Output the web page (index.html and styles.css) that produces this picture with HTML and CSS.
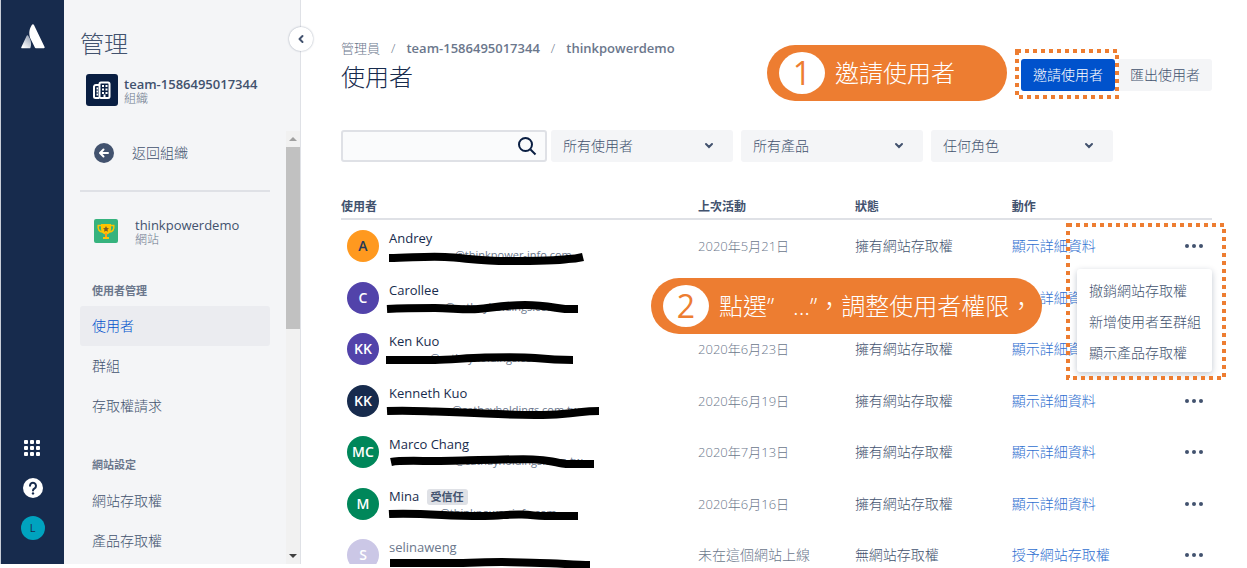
FILE: index.html
```html
<!DOCTYPE html>
<html lang="zh-Hant">
<head>
    <meta charset="UTF-8">
    <meta name="viewport" content="width=device-width, initial-scale=1.0">
    <title>使用者 - 管理</title>
    <link rel="stylesheet" href="styles.css">
</head>
<body>
    <div class="app">
        <nav class="rail" aria-label="產品">
            <a href="#" class="logo" aria-label="首頁">
                <svg width="26" height="26" viewBox="0 0 26 26">
                    <defs>
                        <linearGradient id="fade" x1="1" y1="0" x2="0.3" y2="1">
                            <stop offset="0" stop-color="#8b98ad"/>
                            <stop offset="1" stop-color="#fff"/>
                        </linearGradient>
                    </defs>
                    <path d="M8 11.500c-.4-.5-1-.4-1.300.2L1.300 23.200c-.300.600.1 1.100.8 1.100h7.600c.3 0 .6-.2.7-.4 1.500-3.400.6-8.900-2.400-12.400z" fill="url(#fade)"/>
                    <path d="M11.800.9c-3.300 5-3 10.400-.9 14.700l4.100 8.200c.1.300.4.500.8.500h8c.7 0 1.100-.6.800-1.200L14 .9c-.400-.9-1.700-.9-2.200 0z" fill="#fff"/>
                </svg>
            </a>
            <div class="rail-bottom">
                <button class="rail-btn" aria-label="切換產品">
                    <svg width="17" height="17" viewBox="0 0 17 17" fill="#fff">
                        <rect x="0" y="0" width="4" height="4" rx="1"/><rect x="6" y="0" width="4" height="4" rx="1"/><rect x="12" y="0" width="4" height="4" rx="1"/>
                        <rect x="0" y="6" width="4" height="4" rx="1"/><rect x="6" y="6" width="4" height="4" rx="1"/><rect x="12" y="6" width="4" height="4" rx="1"/>
                        <rect x="0" y="12" width="4" height="4" rx="1"/><rect x="6" y="12" width="4" height="4" rx="1"/><rect x="12" y="12" width="4" height="4" rx="1"/>
                    </svg>
                </button>
                <button class="rail-btn" aria-label="說明">
                    <svg width="20" height="20" viewBox="0 0 20 20">
                        <circle cx="10" cy="10" r="10" fill="#fff"/>
                        <path d="M7 7.800a3 3 0 1 1 4.600 2.500c-1 .6-1.600 1-1.600 2.100" fill="none" stroke="#172b4d" stroke-width="2" stroke-linecap="round"/>
                        <circle cx="10" cy="15.400" r="1.200" fill="#172b4d"/>
                    </svg>
                </button>
                <button class="rail-btn me">L</button>
            </div>
        </nav>

        <aside class="sidebar">
            <button class="collapse" aria-label="收合">
                <svg width="8" height="10" viewBox="0 0 8 10"><path d="M5.500 2L2.500 5l3 3" fill="none" stroke="#42526e" stroke-width="2" stroke-linecap="round" stroke-linejoin="round"/></svg>
            </button>
            <h2 class="side-title">管理</h2>
            <div class="org">
                <span class="org-icon">
                    <svg width="20" height="20" viewBox="0 0 20 20" fill="none" stroke="#fff" stroke-width="2" stroke-linejoin="round">
                        <path d="M7 18H3.500A1.500 1.500 0 0 1 2 16.500V6.500A2 2 0 0 1 4 5h3"/>
                        <rect x="7.500" y="2.500" width="10" height="15.500" rx="1.500"/>
                        <path d="M10 6h2M13.500 6h2M10 9.500h2M13.500 9.500h2M10 13h2M13.500 13h2M4.500 8.500h1.500M4.500 11.500h1.500M4.500 14.500h1.500M12.500 14.500v3"/>
                    </svg>
                </span>
                <div>
                    <div class="org-name">team-1586495017344</div>
                    <div class="kind">組織</div>
                </div>
            </div>
            <div class="side-scroll">
                <div class="side-nav">
                    <a href="#" class="back">
                        <svg width="20" height="20" viewBox="0 0 20 20">
                            <circle cx="10" cy="10" r="10" fill="#42526e"/>
                            <path d="M14 10H6.500M9.500 6.500L6 10l3.500 3.500" fill="none" stroke="#fff" stroke-width="2" stroke-linecap="round" stroke-linejoin="round"/>
                        </svg>
                        <span>返回組織</span>
                    </a>
                    <div class="site">
                        <svg width="24" height="24" viewBox="0 0 24 24">
                            <rect width="24" height="24" rx="2" fill="#36b37e"/>
                            <path d="M7 6.500H4.200c-.6 4 1.300 6.500 4.300 6.500M17 6.500h2.800c.6 4-1.300 6.500-4.300 6.500" fill="none" stroke="#ffc400" stroke-width="1.500"/>
                            <path d="M7 5h10v5c0 3-2 5-4 5.500V18h2v2H9v-2h2v-2.500C9 15 7 13 7 10z" fill="#ffc400"/>
                            <path d="M11 14h2v4h-2z" fill="#ff991f"/>
                            <path d="M12 7l1 2 2 .2-1.500 1.400.4 2.100-1.900-1-1.900 1 .4-2.100L9 9.200 11 9z" fill="#7a5b25"/>
                        </svg>
                        <div>
                            <div class="site-name">thinkpowerdemo</div>
                            <div class="kind">網站</div>
                        </div>
                    </div>
                    <h3 class="group">使用者管理</h3>
                    <a href="#" class="item active">使用者</a>
                    <a href="#" class="item">群組</a>
                    <a href="#" class="item">存取權請求</a>
                    <h3 class="group second">網站設定</h3>
                    <a href="#" class="item">網站存取權</a>
                    <a href="#" class="item">產品存取權</a>
                </div>
                <div class="scrollbar">
                    <span class="arrow up"></span>
                    <span class="thumb"></span>
                    <span class="arrow down"></span>
                </div>
            </div>
        </aside>

        <main class="main">
            <header class="page-head">
                <div>
                    <div class="crumbs">
                        <a href="#">管理員</a><span>/</span><a href="#" class="strong">team-1586495017344</a><span>/</span><a href="#" class="strong">thinkpowerdemo</a>
                    </div>
                    <h1>使用者</h1>
                </div>
                <div class="actions">
                    <div class="callout one"><span class="num">1</span>邀請使用者</div>
                    <div class="invite">
                        <button class="btn primary">邀請使用者</button>
                        <svg class="marker"><rect x="2" y="2"/></svg>
                    </div>
                    <button class="btn">匯出使用者</button>
                </div>
            </header>

            <form class="filters">
                <div class="search">
                    <input type="text" aria-label="搜尋使用者">
                    <svg width="20" height="20" viewBox="0 0 20 20" fill="none" stroke="#091e42" stroke-width="2"><circle cx="8.500" cy="8.500" r="6.500"/><path d="M13.500 13.500l5 5"/></svg>
                </div>
                <div class="selects">
                    <div class="select">
                        <select aria-label="使用者篩選"><option>所有使用者</option></select>
                        <svg width="10" height="8" viewBox="0 0 10 8"><path d="M2 2l3 3 3-3"/></svg>
                    </div>
                    <div class="select">
                        <select aria-label="產品篩選"><option>所有產品</option></select>
                        <svg width="10" height="8" viewBox="0 0 10 8"><path d="M2 2l3 3 3-3"/></svg>
                    </div>
                    <div class="select">
                        <select aria-label="角色篩選"><option>任何角色</option></select>
                        <svg width="10" height="8" viewBox="0 0 10 8"><path d="M2 2l3 3 3-3"/></svg>
                    </div>
                </div>
            </form>

            <div class="table-wrap">
                <table class="users">
                    <thead>
                        <tr><th class="c-user">使用者</th><th class="c-date">上次活動</th><th class="c-state">狀態</th><th>動作</th><th class="c-more"></th></tr>
                    </thead>
                    <tbody>
                        <tr>
                            <td><div class="user"><span class="avatar orange">A</span><div class="who"><div class="name">Andrey</div><div class="mail w1">@thinkpower-info.com</div>
                                <svg class="ink" viewBox="0 0 216 20"><path d="M4 10C25 10 40 8 60 9S95 13 123 13S170 13 183 11Q190 11 198 9"/></svg></div></div></td>
                            <td class="date">2020年5月21日</td><td>擁有網站存取權</td><td><a href="#">顯示詳細資料</a></td>
                            <td class="more">
                                <button class="dots" aria-label="更多"></button>
                                <div class="menu">
                                    <button>撤銷網站存取權</button>
                                    <button>新增使用者至群組</button>
                                    <button>顯示產品存取權</button>
                                </div>
                                <svg class="marker"><rect x="2" y="2"/></svg>
                            </td>
                        </tr>
                        <tr>
                            <td><div class="user"><span class="avatar purple">C</span><div class="who"><div class="name">Carollee</div><div class="mail w2">@cathayholdings.com</div>
                                <svg class="ink" viewBox="0 0 216 20"><path d="M2 9C20 8 35 8 50 8S80 10 93 9S120 5 140 5S170 8 180 9H193"/></svg></div></div></td>
                            <td class="date"></td><td></td><td><a href="#">顯示詳細資料</a></td>
                            <td class="more"><button class="dots" aria-label="更多"></button></td>
                        </tr>
                        <tr>
                            <td><div class="user"><span class="avatar purple">KK</span><div class="who"><div class="name">Ken Kuo</div><div class="mail w3">@cathayholdings.com</div>
                                <svg class="ink" viewBox="0 0 216 20"><path d="M1 9C20 9 35 9 50 9S80 7 100 6.500S140 6 150 7S175 9 188 9"/></svg></div></div></td>
                            <td class="date">2020年6月23日</td><td>擁有網站存取權</td><td><a href="#">顯示詳細資料</a></td>
                            <td class="more"><button class="dots" aria-label="更多"></button></td>
                        </tr>
                        <tr>
                            <td><div class="user"><span class="avatar navy">KK</span><div class="who"><div class="name">Kenneth Kuo</div><div class="mail w4">@cathayholdings.com.tw</div>
                                <svg class="ink" viewBox="0 0 216 20"><path d="M2 8C20 7 35 8 50 8.500S80 9.500 100 10.500S155 13 177 11S200 8 214 8"/></svg></div></div></td>
                            <td class="date">2020年6月19日</td><td>擁有網站存取權</td><td><a href="#">顯示詳細資料</a></td>
                            <td class="more"><button class="dots" aria-label="更多"></button></td>
                        </tr>
                        <tr>
                            <td><div class="user"><span class="avatar green">MC</span><div class="who"><div class="name">Marco Chang</div><div class="mail w5">@cathayholdings.com.tw</div>
                                <svg class="ink" viewBox="0 0 216 20"><path d="M6 8C15 6 35 7 50 7S90 6 117 5.500S155 5 167 7.500S180 10 190 10H209"/></svg></div></div></td>
                            <td class="date">2020年7月13日</td><td>擁有網站存取權</td><td><a href="#">顯示詳細資料</a></td>
                            <td class="more"><button class="dots" aria-label="更多"></button></td>
                        </tr>
                        <tr>
                            <td><div class="user"><span class="avatar green">M</span><div class="who"><div class="name">Mina <span class="tag">受信任</span></div><div class="mail w6">@thinkpower-info.com</div>
                                <svg class="ink" viewBox="0 0 216 20"><path d="M4 8C20 7 40 8 57 9S85 10 100 10S125 8 137 8.500S150 10 160 10H193"/></svg></div></div></td>
                            <td class="date">2020年6月16日</td><td>擁有網站存取權</td><td><a href="#">顯示詳細資料</a></td>
                            <td class="more"><button class="dots" aria-label="更多"></button></td>
                        </tr>
                        <tr class="inactive">
                            <td><div class="user"><span class="avatar lilac">S</span><div class="who"><div class="name">selinaweng</div><div class="mail"></div>
                                <svg class="ink" viewBox="0 0 216 20"><path d="M5 6H67C85 6 100 5 117 5S140 6 155 6S190 8 205 8"/></svg></div></div></td>
                            <td class="never">未在這個網站上線</td><td>無網站存取權</td><td><a href="#">授予網站存取權</a></td>
                            <td class="more"><button class="dots" aria-label="更多"></button></td>
                        </tr>
                    </tbody>
                </table>
                <div class="callout two"><span class="num">2</span>點選”&nbsp; &nbsp;...”，調整使用者權限，</div>
            </div>
        </main>
    </div>
</body>
</html>
```
FILE: styles.css
```css
:root {
    --navy: #172b4d;
    --text: #42526e;
    --muted: #6b778c;
    --link: #2f6fd0;
    --blue: #0052cc;
    --panel: #f4f5f7;
    --line: #dfe1e6;
    --orange: #ed7d31;
}

* {
    margin: 0;
    padding: 0;
    box-sizing: border-box;
}

body {
    font-family: "Open Sans", "Noto Sans CJK TC", sans-serif;
    font-size: 14px;
    font-weight: 300;
    line-height: 20px;
    color: var(--text);
    background: #fff;
    overflow: hidden;
}

button, input, select {
    font: inherit;
    color: inherit;
    border: none;
    background: none;
}

button {
    cursor: pointer;
}

a {
    color: inherit;
    text-decoration: none;
}

svg {
    display: block;
    flex: none;
}

.app {
    display: flex;
    height: 100vh;
}

/* white strip along the bottom edge of the window */
.app::after {
    content: "";
    position: fixed;
    left: 0;
    right: 0;
    bottom: 0;
    height: 4px;
    background: #fff;
    z-index: 1;
}

/* left rail */
.rail {
    width: 64px;
    flex: none;
    display: flex;
    flex-direction: column;
    align-items: center;
    justify-content: space-between;
    padding: 24px 0 28px;
    background: var(--navy);
    border-left: 1px solid #c8ced8;
}

.rail-bottom {
    display: flex;
    flex-direction: column;
    gap: 16px;
}

.rail-btn {
    width: 24px;
    height: 24px;
    display: flex;
    align-items: center;
    justify-content: center;
}

.me {
    border-radius: 50%;
    background: #00a3bf;
    color: var(--navy);
    font-size: 11px;
    font-weight: 400;
}

/* sidebar */
.sidebar {
    position: relative;
    width: 237px;
    flex: none;
    display: flex;
    flex-direction: column;
    padding-top: 28px;
    background: var(--panel);
    border-right: 1px solid var(--line);
}

.collapse {
    position: absolute;
    top: 27px;
    right: -13px;
    width: 24px;
    height: 24px;
    display: flex;
    align-items: center;
    justify-content: center;
    border-radius: 50%;
    background: #fff;
    box-shadow: 0 0 2px rgba(9, 30, 66, 0.4);
}

.side-title {
    padding-left: 16px;
    font-size: 24px;
    font-weight: 300;
    line-height: 32px;
}

.org {
    display: flex;
    gap: 6px;
    padding: 14px 16px 25px 22px;
}

.org-icon {
    width: 32px;
    height: 32px;
    display: flex;
    align-items: center;
    justify-content: center;
    border-radius: 3px;
    background: #091e42;
}

.org-name {
    padding-top: 1px;
    font-size: 13px;
    font-weight: 600;
    line-height: 18px;
}

.kind {
    font-size: 12px;
    line-height: 12px;
    color: var(--muted);
}

.side-scroll {
    flex: 1;
    min-height: 0;
    display: flex;
    margin-bottom: 4px;
}

.side-nav {
    flex: 1;
    overflow: hidden;
    padding: 0 16px;
}

.back {
    display: flex;
    align-items: center;
    gap: 18px;
    height: 61px;
    padding: 0 14px 16px;
    border-bottom: 2px solid var(--line);
}

.site {
    display: flex;
    align-items: center;
    gap: 17px;
    padding: 24px 14px 0;
}

.site-name {
    font-size: 13px;
    font-weight: 400;
    line-height: 18px;
}

.group {
    padding: 35px 12px 5px;
    font-size: 11px;
    font-weight: 600;
    line-height: 20px;
    color: var(--muted);
}

.group.second {
    padding-top: 29px;
    padding-bottom: 6px;
}

.item {
    display: block;
    padding: 10px 12px;
    border-radius: 3px;
}

.item.active {
    background: #ebecf0;
    color: var(--blue);
}

.scrollbar {
    width: 14px;
    display: flex;
    flex-direction: column;
    background: #f1f1f1;
}

.arrow {
    height: 16px;
    flex: none;
    display: flex;
    align-items: center;
    justify-content: center;
}

.arrow::before {
    content: "";
    border: 4px solid transparent;
    border-top-width: 0;
    border-bottom-color: #a0a0a0;
}

.arrow.down {
    margin-top: auto;
}

.arrow.down::before {
    border-width: 4px 4px 0;
    border-top-color: #404040;
}

.thumb {
    height: 42%;
    background: #c1c1c1;
}

/* page */
.main {
    flex: 1;
    min-width: 0;
    overflow: hidden;
    padding: 38px 35px 0 40px;
}

.page-head {
    display: flex;
    justify-content: space-between;
    align-items: flex-start;
}

.crumbs {
    display: flex;
    font-size: 13px;
    color: var(--muted);
}

.crumbs span {
    padding: 0 11px;
}

.crumbs .strong {
    font-weight: 600;
}

h1 {
    font-size: 24px;
    font-weight: 300;
    line-height: 38px;
    color: var(--navy);
}

.actions {
    position: relative;
    display: flex;
    gap: 3px;
    padding-top: 21px;
}

.btn {
    height: 32px;
    padding: 0 12px;
    border-radius: 3px;
    background: var(--panel);
}

.btn.primary {
    background: var(--blue);
    color: #fff;
}

.invite {
    position: relative;
}

/* orange annotations */
.marker {
    position: absolute;
    pointer-events: none;
}

.marker rect {
    width: calc(100% - 4px);
    height: calc(100% - 4px);
    fill: none;
    stroke: var(--orange);
    stroke-width: 4px;
    stroke-dasharray: 4 4;
}

.invite .marker {
    top: -10px;
    left: -6px;
    width: calc(100% + 10px);
    height: 50px;
}

.callout {
    position: absolute;
    display: flex;
    align-items: center;
    gap: 10px;
    height: 56px;
    padding: 0 12px;
    border-radius: 28px;
    background: var(--orange);
    color: #fff;
    font-size: 24px;
    white-space: nowrap;
    z-index: 2;
}

.callout.one {
    top: 7px;
    right: 205px;
    width: 240px;
}

.callout.two {
    top: 116px;
    right: 170px;
    width: 391px;
}

.num {
    width: 46px;
    height: 42px;
    flex: none;
    display: flex;
    align-items: center;
    justify-content: center;
    border-radius: 50%;
    background: #fff;
    color: var(--orange);
    font-size: 32px;
    font-weight: 400;
}

/* filters */
.filters {
    display: flex;
    gap: 4px;
    padding-top: 34px;
}

.search {
    width: 206px;
    display: flex;
    align-items: center;
    padding: 0 8px;
    border: 2px solid var(--line);
    border-radius: 3px;
    background: #fafbfc;
}

.search input {
    flex: 1;
    min-width: 0;
    height: 28px;
    outline: none;
}

.selects {
    display: flex;
    gap: 8px;
}

.select {
    position: relative;
    width: 182px;
}

.select select {
    width: 100%;
    height: 32px;
    padding: 0 12px;
    border-radius: 3px;
    background: var(--panel);
    appearance: none;
}

.select svg {
    position: absolute;
    top: 12px;
    right: 19px;
    fill: none;
    stroke: var(--text);
    stroke-width: 2;
    stroke-linecap: round;
    pointer-events: none;
}

/* users table */
.table-wrap {
    position: relative;
    padding-top: 33px;
}

.users {
    width: 100%;
    height: 386px;
    border-collapse: collapse;
    table-layout: fixed;
    text-align: left;
}

.users th {
    height: 24px;
    border-bottom: 2px solid var(--line);
    font-size: 12px;
    font-weight: 600;
    line-height: 20px;
}

.c-user {
    width: 41%;
}

.c-date, .c-state {
    width: 18%;
}

.c-more {
    width: 36px;
}

.users td {
    white-space: nowrap;
}

.users .date {
    font-size: 13px;
    color: var(--muted);
}

.users .never {
    color: var(--muted);
}

.users a {
    color: var(--link);
}

.user {
    display: flex;
    align-items: center;
    gap: 10px;
    padding-left: 6px;
}

.avatar {
    width: 32px;
    height: 32px;
    display: flex;
    align-items: center;
    justify-content: center;
    border-radius: 50%;
    color: #fff;
    font-weight: 600;
}

.orange { background: #ff991f; color: #253858; }
.purple { background: #5243aa; }
.navy { background: var(--navy); }
.green { background: #00875a; }
.lilac { background: #cbc7e6; }

.who {
    position: relative;
}

.name {
    font-size: 13px;
    font-weight: 400;
    color: var(--navy);
}

.inactive .name {
    color: var(--muted);
}

.mail {
    height: 16px;
    font-size: 11px;
    font-weight: 400;
    line-height: 14px;
    color: var(--muted);
}

.w1, .w5 { padding-left: 66px; }
.w2 { padding-left: 56px; }
.w3 { padding-left: 41px; }
.w4 { padding-left: 63px; }
.w6 { padding-left: 51px; }

/* marker line drawn over the address */
.ink {
    position: absolute;
    top: 20px;
    left: -4px;
    width: 216px;
    height: 20px;
    fill: none;
    stroke: #000;
    stroke-width: 8;
    z-index: 2;
}

.tag {
    margin-left: 4px;
    padding: 0 4px;
    border-radius: 3px;
    background: var(--line);
    color: var(--text);
    font-size: 11px;
    font-weight: 600;
    line-height: 16px;
    display: inline-block;
}

.more {
    position: relative;
}

.dots {
    width: 36px;
    height: 24px;
    display: flex;
    align-items: center;
    justify-content: center;
}

.dots::before {
    content: "";
    width: 4px;
    height: 4px;
    border-radius: 50%;
    background: currentColor;
    box-shadow: -7px 0 currentColor, 7px 0 currentColor;
}

.menu {
    position: absolute;
    top: 49px;
    right: 0;
    width: 135px;
    padding: 6px 0 4px;
    border-radius: 3px;
    background: #fff;
    box-shadow: 0 2px 6px rgba(9, 30, 66, 0.25);
    z-index: 1;
}

.menu button {
    display: block;
    padding: 6px 12px 5px;
    white-space: nowrap;
}

.more .marker {
    top: 3px;
    right: -14px;
    width: 160px;
    height: 157px;
    z-index: 1;
}
```
